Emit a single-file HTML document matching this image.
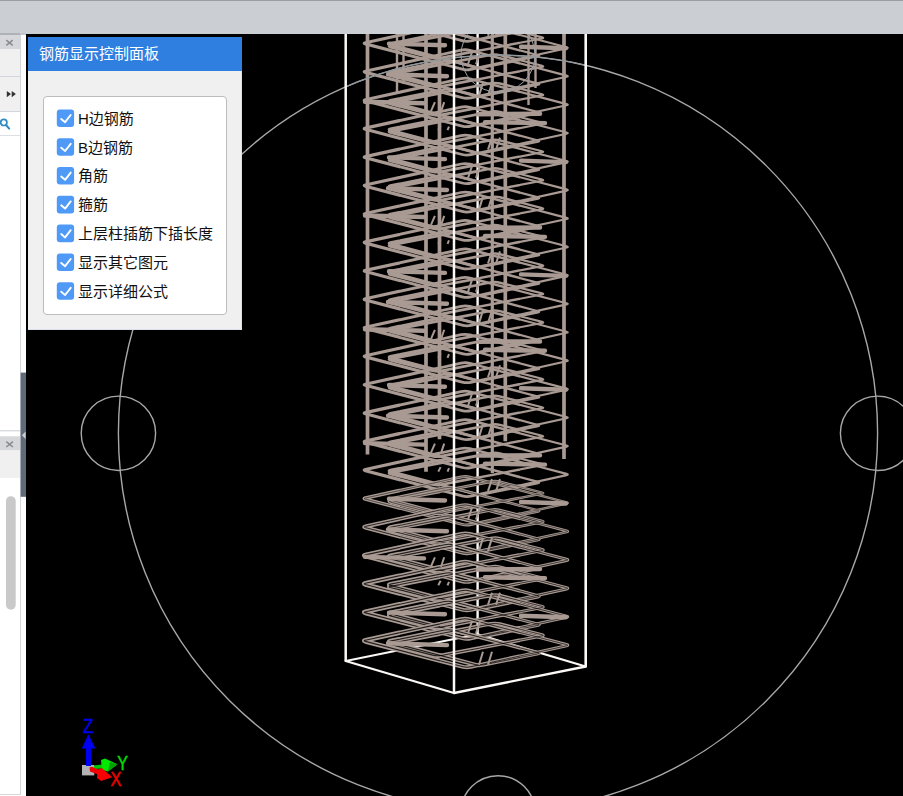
<!DOCTYPE html>
<html lang="zh-CN">
<head>
<meta charset="utf-8">
<title>钢筋三维</title>
<style>
html,body{margin:0;padding:0;}
body{width:903px;height:796px;overflow:hidden;position:relative;background:#fff;font-family:"Liberation Sans","Noto Sans CJK SC",sans-serif;}
.abs{position:absolute;}
#topbar{left:0;top:0;width:903px;height:34px;background:#cbced3;}
#topline{left:0;top:0;width:903px;height:1px;background:#9c9ea2;}
#view{left:26px;top:34px;width:877px;height:762px;background:#000;overflow:hidden;}
#side{left:0;top:34px;width:26px;height:762px;background:#fff;}
#panel{left:28px;top:37px;width:214px;height:293px;background:#f0f0f0;box-sizing:border-box;border-right:1px solid #d9e0f0;border-bottom:1px solid #d9e0f0;}
#ptitle{left:0;top:0;width:214px;height:34px;background:#2e7fe0;color:#fff;font-size:15px;line-height:34px;}
#ptitle span{position:absolute;left:11px;top:0;white-space:nowrap;}
#gbox{left:15px;top:59px;width:182px;height:217px;background:#fff;border:1px solid #bcbcbc;border-radius:4px;}
.row{position:absolute;left:34px;height:18px;white-space:nowrap;font-size:15px;color:#111;line-height:18px;}
</style>
</head>
<body>
<div id="topbar" class="abs"></div>
<div id="topline" class="abs"></div>
<div id="side" class="abs">
<div class="abs" style="left:0;top:0;width:20px;height:760px;background:#fff;border-right:1px solid #d4d7da;border-bottom:1.5px solid #d8d8d8"></div>
<div class="abs" style="left:0;top:0;width:20px;height:15px;background:#d5d7db"></div>
<div class="abs" style="left:0;top:-1px;width:20px;height:1.5px;background:#aeb2b8"></div><div class="abs" style="left:20px;top:-1px;width:6px;height:1.5px;background:#c2c5ca"></div>
<div class="abs" style="left:0;top:15px;width:20px;height:62px;background:#f0f0f0"></div>
<div class="abs" style="left:0;top:41.6px;width:20px;height:1px;background:#d2d5d9"></div>
<div class="abs" style="left:0;top:76.8px;width:20px;height:1px;background:#d2d5d9"></div>
<div class="abs" style="left:0;top:101px;width:20px;height:1px;background:#dcdfe2"></div>
<svg class="abs" style="left:0;top:0" width="26" height="762" viewBox="0 34 26 762">
  <path d="M6.3 40.2 L12.7 45.4 M12.7 40.2 L6.3 45.4" stroke="#8a8a8a" stroke-width="1.5" fill="none"/>
  <path d="M6.8 91 L11 94.1 L6.8 97.2 Z M11.7 91 L15.9 94.1 L11.7 97.2 Z" fill="#333"/>
  <circle cx="3.8" cy="122.4" r="3.1" fill="none" stroke="#2d8cc4" stroke-width="1.7"/>
  <path d="M6 125 L9.2 128.6" stroke="#2d8cc4" stroke-width="2" stroke-linecap="round"/>
  <rect x="20.6" y="372.6" width="5.4" height="124.2" fill="#5f6b79"/>
  <path d="M25.6 431.6 L25.6 439 L21.9 435.3 Z" fill="#c9ced4"/>
  <rect x="0" y="430.3" width="20" height="1" fill="#c9ccd0"/>
  <rect x="0" y="436.3" width="20" height="14.2" fill="#d5d7db"/>
  <rect x="0" y="450.5" width="20" height="27.5" fill="#f0f0f0"/>
  <path d="M6.3 441.6 L12.9 447 M12.9 441.6 L6.3 447" stroke="#8a8a8a" stroke-width="1.5" fill="none"/>
  <rect x="6" y="496.2" width="9.7" height="113.5" rx="4.8" fill="#c9c9c9"/>
</svg>

</div>
<div id="view" class="abs">
<svg width="877" height="762" viewBox="0 0 877 762" style="position:absolute;left:0;top:0">
<ellipse cx="472.0" cy="399.3" rx="379.6" ry="378.2" fill="none" stroke="#a8a8a8" stroke-width="1.4"/>
<circle cx="92.4" cy="399.3" r="37.2" fill="none" stroke="#a8a8a8" stroke-width="1.4"/>
<circle cx="851.6" cy="399.3" r="37.2" fill="none" stroke="#a8a8a8" stroke-width="1.4"/>
<circle cx="472.0" cy="778.9" r="37.2" fill="none" stroke="#a8a8a8" stroke-width="1.4"/>
<line x1="451.6" y1="-34.0" x2="451.6" y2="600.3" stroke="#fbf8f6" stroke-width="2.4" stroke-linecap="butt"/>
<line x1="451.6" y1="600.3" x2="319.7" y2="627.0" stroke="#fbf8f6" stroke-width="2.0" stroke-linecap="round"/>
<line x1="451.6" y1="600.3" x2="559.7" y2="632.5" stroke="#fbf8f6" stroke-width="2.0" stroke-linecap="round"/>
<line x1="341.5" y1="-4.0" x2="341.5" y2="420.5" stroke="#a99a93" stroke-width="3.7" stroke-linecap="butt"/>
<line x1="371.0" y1="-4.0" x2="371.0" y2="59.0" stroke="#a99a93" stroke-width="2.4" stroke-linecap="butt"/>
<line x1="377.5" y1="-4.0" x2="377.5" y2="50.0" stroke="#a99a93" stroke-width="2.4" stroke-linecap="butt"/>
<line x1="400.0" y1="-4.0" x2="400.0" y2="437.8" stroke="#a99a93" stroke-width="3.7" stroke-linecap="butt"/>
<line x1="413.5" y1="-4.0" x2="413.5" y2="405.2" stroke="#a99a93" stroke-width="3.7" stroke-linecap="butt"/>
<line x1="466.3" y1="-4.0" x2="466.3" y2="439.0" stroke="#a99a93" stroke-width="3.2" stroke-linecap="butt"/>
<line x1="479.3" y1="-4.0" x2="479.3" y2="407.2" stroke="#a99a93" stroke-width="3.7" stroke-linecap="butt"/>
<line x1="502.5" y1="-4.0" x2="502.5" y2="71.0" stroke="#a99a93" stroke-width="2.4" stroke-linecap="butt"/>
<line x1="509.5" y1="-4.0" x2="509.5" y2="54.0" stroke="#a99a93" stroke-width="2.4" stroke-linecap="butt"/>
<line x1="538.0" y1="-4.0" x2="538.0" y2="425.0" stroke="#a99a93" stroke-width="3.7" stroke-linecap="butt"/>
<defs><g id="st" fill="none" stroke-linejoin="round"><path d="M339.4 -19.7 Q337.0 -19.2 339.4 -18.5 L436.1 6.7 Q440.5 7.8 444.9 6.9 L540.6 -14.1 Q543.0 -14.7 540.6 -15.3 L443.9 -40.5 Q439.5 -41.7 435.1 -40.7Z" stroke="#a99a93" style="stroke-width:calc(3.00px*var(--t))" />
<path d="M364.5 -16.6 Q362.0 -16.2 364.4 -15.5 L406.6 -4.8 Q411.0 -3.7 415.4 -4.5 L516.0 -24.0 Q518.5 -24.5 516.1 -25.1 L473.9 -35.8 Q469.5 -37.0 465.1 -36.1Z" stroke="#a99a93" style="stroke-width:calc(3.00px*var(--t))" />
<path d="M364.4 -18.8 Q362.0 -18.2 364.4 -17.6 L449.1 4.7 Q453.5 5.8 457.9 4.9 L512.1 -6.1 Q514.5 -6.7 512.1 -7.3 L427.4 -29.6 Q423.0 -30.8 418.6 -29.8Z" stroke="#a99a93" style="stroke-width:calc(3.00px*var(--t))" />
<path d="M339.4 8.8 Q337.0 9.3 339.4 9.9 L436.1 35.2 Q440.5 36.3 444.9 35.3 L540.6 14.3 Q543.0 13.8 540.6 13.2 L443.9 -12.1 Q439.5 -13.2 435.1 -12.2Z" stroke="#a99a93" style="stroke-width:calc(3.00px*var(--t))" />
<path d="M364.5 11.8 Q362.0 12.3 364.4 12.9 L406.6 23.7 Q411.0 24.8 415.4 23.9 L516.0 4.5 Q518.5 4.0 516.1 3.4 L473.9 -7.4 Q469.5 -8.5 465.1 -7.6Z" stroke="#a99a93" style="stroke-width:calc(3.00px*var(--t))" />
<path d="M364.4 9.7 Q362.0 10.2 364.4 10.8 L449.1 33.2 Q453.5 34.3 457.9 33.4 L512.1 22.3 Q514.5 21.8 512.1 21.2 L427.4 -1.2 Q423.0 -2.3 418.6 -1.4Z" stroke="#a99a93" style="stroke-width:calc(3.00px*var(--t))" />
<path d="M339.4 37.2 Q337.0 37.8 339.4 38.4 L436.1 63.6 Q440.5 64.8 444.9 63.8 L540.6 42.8 Q543.0 42.2 540.6 41.6 L443.9 16.4 Q439.5 15.2 435.1 16.2Z" stroke="#a99a93" style="stroke-width:calc(3.00px*var(--t))" />
<path d="M364.5 40.3 Q362.0 40.8 364.4 41.4 L406.6 52.1 Q411.0 53.2 415.4 52.4 L516.0 32.9 Q518.5 32.5 516.1 31.8 L473.9 21.1 Q469.5 20.0 465.1 20.8Z" stroke="#a99a93" style="stroke-width:calc(3.00px*var(--t))" />
<path d="M364.4 38.1 Q362.0 38.7 364.4 39.3 L449.1 61.6 Q453.5 62.8 457.9 61.8 L512.1 50.8 Q514.5 50.2 512.1 49.6 L427.4 27.3 Q423.0 26.1 418.6 27.1Z" stroke="#a99a93" style="stroke-width:calc(3.00px*var(--t))" />
<path d="M339.4 65.7 Q337.0 66.2 339.4 66.8 L436.1 92.1 Q440.5 93.2 444.9 92.2 L540.6 71.2 Q543.0 70.7 540.6 70.1 L443.9 44.8 Q439.5 43.7 435.1 44.7Z" stroke="#a99a93" style="stroke-width:calc(3.00px*var(--t))" />
<path d="M364.5 68.7 Q362.0 69.2 364.4 69.8 L406.6 80.6 Q411.0 81.7 415.4 80.8 L516.0 61.4 Q518.5 60.9 516.1 60.3 L473.9 49.5 Q469.5 48.4 465.1 49.3Z" stroke="#a99a93" style="stroke-width:calc(3.00px*var(--t))" />
<path d="M364.4 66.6 Q362.0 67.1 364.4 67.7 L449.1 90.1 Q453.5 91.2 457.9 90.3 L512.1 79.2 Q514.5 78.7 512.1 78.1 L427.4 55.7 Q423.0 54.6 418.6 55.5Z" stroke="#a99a93" style="stroke-width:calc(3.00px*var(--t))" />
<path d="M339.4 94.1 Q337.0 94.6 339.4 95.3 L436.1 120.5 Q440.5 121.6 444.9 120.7 L540.6 99.7 Q543.0 99.1 540.6 98.5 L443.9 73.3 Q439.5 72.1 435.1 73.1Z" stroke="#a99a93" style="stroke-width:calc(3.00px*var(--t))" />
<path d="M364.5 97.2 Q362.0 97.6 364.4 98.3 L406.6 109.0 Q411.0 110.1 415.4 109.3 L516.0 89.8 Q518.5 89.3 516.1 88.7 L473.9 78.0 Q469.5 76.8 465.1 77.7Z" stroke="#a99a93" style="stroke-width:calc(3.00px*var(--t))" />
<path d="M364.4 95.0 Q362.0 95.5 364.4 96.2 L449.1 118.5 Q453.5 119.6 457.9 118.7 L512.1 107.7 Q514.5 107.1 512.1 106.5 L427.4 84.2 Q423.0 83.0 418.6 84.0Z" stroke="#a99a93" style="stroke-width:calc(3.00px*var(--t))" />
<path d="M339.4 122.6 Q337.0 123.1 339.4 123.7 L436.1 149.0 Q440.5 150.1 444.9 149.1 L540.6 128.1 Q543.0 127.6 540.6 127.0 L443.9 101.7 Q439.5 100.6 435.1 101.6Z" stroke="#a99a93" style="stroke-width:calc(3.00px*var(--t))" />
<path d="M364.5 125.6 Q362.0 126.1 364.4 126.7 L406.6 137.5 Q411.0 138.6 415.4 137.7 L516.0 118.3 Q518.5 117.8 516.1 117.2 L473.9 106.4 Q469.5 105.3 465.1 106.2Z" stroke="#a99a93" style="stroke-width:calc(3.00px*var(--t))" />
<path d="M364.4 123.5 Q362.0 124.0 364.4 124.6 L449.1 147.0 Q453.5 148.1 457.9 147.2 L512.1 136.1 Q514.5 135.6 512.1 135.0 L427.4 112.6 Q423.0 111.5 418.6 112.4Z" stroke="#a99a93" style="stroke-width:calc(3.00px*var(--t))" />
<path d="M339.4 151.0 Q337.0 151.6 339.4 152.2 L436.1 177.4 Q440.5 178.6 444.9 177.6 L540.6 156.6 Q543.0 156.1 540.6 155.4 L443.9 130.2 Q439.5 129.1 435.1 130.0Z" stroke="#a99a93" style="stroke-width:calc(3.00px*var(--t))" />
<path d="M364.5 154.1 Q362.0 154.6 364.4 155.2 L406.6 165.9 Q411.0 167.1 415.4 166.2 L516.0 146.7 Q518.5 146.2 516.1 145.6 L473.9 134.9 Q469.5 133.8 465.1 134.6Z" stroke="#a99a93" style="stroke-width:calc(3.00px*var(--t))" />
<path d="M364.4 151.9 Q362.0 152.5 364.4 153.1 L449.1 175.4 Q453.5 176.6 457.9 175.6 L512.1 164.6 Q514.5 164.1 512.1 163.4 L427.4 141.1 Q423.0 140.0 418.6 140.9Z" stroke="#a99a93" style="stroke-width:calc(3.00px*var(--t))" />
<path d="M339.4 179.5 Q337.0 180.0 339.4 180.6 L436.1 205.9 Q440.5 207.0 444.9 206.0 L540.6 185.0 Q543.0 184.5 540.6 183.9 L443.9 158.6 Q439.5 157.5 435.1 158.5Z" stroke="#a99a93" style="stroke-width:calc(3.00px*var(--t))" />
<path d="M364.5 182.5 Q362.0 183.0 364.4 183.6 L406.6 194.4 Q411.0 195.5 415.4 194.6 L516.0 175.2 Q518.5 174.7 516.1 174.1 L473.9 163.3 Q469.5 162.2 465.1 163.1Z" stroke="#a99a93" style="stroke-width:calc(3.00px*var(--t))" />
<path d="M364.4 180.4 Q362.0 180.9 364.4 181.5 L449.1 203.9 Q453.5 205.0 457.9 204.1 L512.1 193.0 Q514.5 192.5 512.1 191.9 L427.4 169.5 Q423.0 168.4 418.6 169.3Z" stroke="#a99a93" style="stroke-width:calc(3.00px*var(--t))" />
<path d="M339.4 207.9 Q337.0 208.4 339.4 209.1 L436.1 234.3 Q440.5 235.4 444.9 234.5 L540.6 213.5 Q543.0 212.9 540.6 212.3 L443.9 187.1 Q439.5 185.9 435.1 186.9Z" stroke="#a99a93" style="stroke-width:calc(3.00px*var(--t))" />
<path d="M364.5 211.0 Q362.0 211.4 364.4 212.1 L406.6 222.8 Q411.0 223.9 415.4 223.1 L516.0 203.6 Q518.5 203.1 516.1 202.5 L473.9 191.8 Q469.5 190.6 465.1 191.5Z" stroke="#a99a93" style="stroke-width:calc(3.00px*var(--t))" />
<path d="M364.4 208.8 Q362.0 209.3 364.4 210.0 L449.1 232.3 Q453.5 233.4 457.9 232.5 L512.1 221.5 Q514.5 220.9 512.1 220.3 L427.4 198.0 Q423.0 196.8 418.6 197.8Z" stroke="#a99a93" style="stroke-width:calc(3.00px*var(--t))" />
<path d="M339.4 236.4 Q337.0 236.9 339.4 237.5 L436.1 262.8 Q440.5 263.9 444.9 262.9 L540.6 241.9 Q543.0 241.4 540.6 240.8 L443.9 215.5 Q439.5 214.4 435.1 215.4Z" stroke="#a99a93" style="stroke-width:calc(3.00px*var(--t))" />
<path d="M364.5 239.4 Q362.0 239.9 364.4 240.5 L406.6 251.3 Q411.0 252.4 415.4 251.5 L516.0 232.1 Q518.5 231.6 516.1 231.0 L473.9 220.2 Q469.5 219.1 465.1 220.0Z" stroke="#a99a93" style="stroke-width:calc(3.00px*var(--t))" />
<path d="M364.4 237.3 Q362.0 237.8 364.4 238.4 L449.1 260.8 Q453.5 261.9 457.9 261.0 L512.1 249.9 Q514.5 249.4 512.1 248.8 L427.4 226.4 Q423.0 225.3 418.6 226.2Z" stroke="#a99a93" style="stroke-width:calc(3.00px*var(--t))" />
<path d="M339.4 264.8 Q337.0 265.4 339.4 266.0 L436.1 291.2 Q440.5 292.4 444.9 291.4 L540.6 270.4 Q543.0 269.9 540.6 269.2 L443.9 244.0 Q439.5 242.9 435.1 243.8Z" stroke="#a99a93" style="stroke-width:calc(3.00px*var(--t))" />
<path d="M364.5 267.9 Q362.0 268.4 364.4 269.0 L406.6 279.7 Q411.0 280.9 415.4 280.0 L516.0 260.5 Q518.5 260.1 516.1 259.4 L473.9 248.7 Q469.5 247.6 465.1 248.4Z" stroke="#a99a93" style="stroke-width:calc(3.00px*var(--t))" />
<path d="M364.4 265.7 Q362.0 266.2 364.4 266.9 L449.1 289.2 Q453.5 290.4 457.9 289.4 L512.1 278.4 Q514.5 277.9 512.1 277.2 L427.4 254.9 Q423.0 253.8 418.6 254.7Z" stroke="#a99a93" style="stroke-width:calc(3.00px*var(--t))" />
<path d="M339.4 293.3 Q337.0 293.8 339.4 294.4 L436.1 319.7 Q440.5 320.8 444.9 319.8 L540.6 298.8 Q543.0 298.3 540.6 297.7 L443.9 272.4 Q439.5 271.3 435.1 272.3Z" stroke="#a99a93" style="stroke-width:calc(3.00px*var(--t))" />
<path d="M364.5 296.3 Q362.0 296.8 364.4 297.4 L406.6 308.2 Q411.0 309.3 415.4 308.4 L516.0 289.0 Q518.5 288.5 516.1 287.9 L473.9 277.1 Q469.5 276.0 465.1 276.9Z" stroke="#a99a93" style="stroke-width:calc(3.00px*var(--t))" />
<path d="M364.4 294.2 Q362.0 294.7 364.4 295.3 L449.1 317.7 Q453.5 318.8 457.9 317.9 L512.1 306.8 Q514.5 306.3 512.1 305.7 L427.4 283.3 Q423.0 282.2 418.6 283.1Z" stroke="#a99a93" style="stroke-width:calc(3.00px*var(--t))" />
<path d="M339.4 321.7 Q337.0 322.2 339.4 322.9 L436.1 348.1 Q440.5 349.2 444.9 348.3 L540.6 327.3 Q543.0 326.8 540.6 326.1 L443.9 300.9 Q439.5 299.8 435.1 300.7Z" stroke="#a99a93" style="stroke-width:calc(3.00px*var(--t))" />
<path d="M364.5 324.8 Q362.0 325.2 364.4 325.9 L406.6 336.6 Q411.0 337.8 415.4 336.9 L516.0 317.4 Q518.5 316.9 516.1 316.3 L473.9 305.6 Q469.5 304.4 465.1 305.3Z" stroke="#a99a93" style="stroke-width:calc(3.00px*var(--t))" />
<path d="M364.4 322.6 Q362.0 323.1 364.4 323.8 L449.1 346.1 Q453.5 347.2 457.9 346.3 L512.1 335.3 Q514.5 334.8 512.1 334.1 L427.4 311.8 Q423.0 310.6 418.6 311.6Z" stroke="#a99a93" style="stroke-width:calc(3.00px*var(--t))" />
<path d="M339.4 350.2 Q337.0 350.7 339.4 351.3 L436.1 376.6 Q440.5 377.7 444.9 376.7 L540.6 355.7 Q543.0 355.2 540.6 354.6 L443.9 329.3 Q439.5 328.2 435.1 329.2Z" stroke="#a99a93" style="stroke-width:calc(3.00px*var(--t))" />
<path d="M364.5 353.2 Q362.0 353.7 364.4 354.3 L406.6 365.1 Q411.0 366.2 415.4 365.3 L516.0 345.9 Q518.5 345.4 516.1 344.8 L473.9 334.0 Q469.5 332.9 465.1 333.8Z" stroke="#a99a93" style="stroke-width:calc(3.00px*var(--t))" />
<path d="M364.4 351.1 Q362.0 351.6 364.4 352.2 L449.1 374.6 Q453.5 375.7 457.9 374.8 L512.1 363.7 Q514.5 363.2 512.1 362.6 L427.4 340.2 Q423.0 339.1 418.6 340.0Z" stroke="#a99a93" style="stroke-width:calc(3.00px*var(--t))" />
<path d="M339.4 378.6 Q337.0 379.1 339.4 379.8 L436.1 405.0 Q440.5 406.1 444.9 405.2 L540.6 384.2 Q543.0 383.6 540.6 383.0 L443.9 357.8 Q439.5 356.6 435.1 357.6Z" stroke="#a99a93" style="stroke-width:calc(3.00px*var(--t))" />
<path d="M364.5 381.7 Q362.0 382.1 364.4 382.8 L406.6 393.5 Q411.0 394.6 415.4 393.8 L516.0 374.3 Q518.5 373.8 516.1 373.2 L473.9 362.5 Q469.5 361.3 465.1 362.2Z" stroke="#a99a93" style="stroke-width:calc(3.00px*var(--t))" />
<path d="M364.4 379.5 Q362.0 380.0 364.4 380.7 L449.1 403.0 Q453.5 404.1 457.9 403.2 L512.1 392.2 Q514.5 391.6 512.1 391.0 L427.4 368.7 Q423.0 367.5 418.6 368.5Z" stroke="#a99a93" style="stroke-width:calc(3.00px*var(--t))" />
<path d="M339.4 407.1 Q337.0 407.6 339.4 408.2 L436.1 433.5 Q440.5 434.6 444.9 433.6 L540.6 412.6 Q543.0 412.1 540.6 411.5 L443.9 386.2 Q439.5 385.1 435.1 386.1Z" stroke="#a99a93" style="stroke-width:calc(3.00px*var(--t))" />
<path d="M364.5 410.1 Q362.0 410.6 364.4 411.2 L406.6 422.0 Q411.0 423.1 415.4 422.2 L516.0 402.8 Q518.5 402.3 516.1 401.7 L473.9 390.9 Q469.5 389.8 465.1 390.7Z" stroke="#a99a93" style="stroke-width:calc(3.00px*var(--t))" />
<path d="M364.4 408.0 Q362.0 408.5 364.4 409.1 L449.1 431.5 Q453.5 432.6 457.9 431.7 L512.1 420.6 Q514.5 420.1 512.1 419.5 L427.4 397.1 Q423.0 396.0 418.6 396.9Z" stroke="#a99a93" style="stroke-width:calc(3.00px*var(--t))" />
<path d="M339.4 435.5 Q337.0 436.1 339.4 436.7 L436.1 461.9 Q440.5 463.1 444.9 462.1 L540.6 441.1 Q543.0 440.6 540.6 439.9 L443.9 414.7 Q439.5 413.6 435.1 414.5Z" stroke="#a99a93" style="stroke-width:calc(3.00px*var(--t))" />
<path d="M364.5 438.6 Q362.0 439.1 364.4 439.7 L406.6 450.4 Q411.0 451.6 415.4 450.7 L516.0 431.2 Q518.5 430.8 516.1 430.1 L473.9 419.4 Q469.5 418.2 465.1 419.1Z" stroke="#a99a93" style="stroke-width:calc(3.00px*var(--t))" />
<path d="M364.4 436.4 Q362.0 436.9 364.4 437.6 L449.1 459.9 Q453.5 461.1 457.9 460.1 L512.1 449.1 Q514.5 448.6 512.1 447.9 L427.4 425.6 Q423.0 424.4 418.6 425.4Z" stroke="#a99a93" style="stroke-width:calc(3.00px*var(--t))" />
<path d="M339.4 464.0 Q337.0 464.5 339.4 465.1 L436.1 490.4 Q440.5 491.5 444.9 490.5 L540.6 469.5 Q543.0 469.0 540.6 468.4 L443.9 443.1 Q439.5 442.0 435.1 443.0Z" stroke="#a99a93" style="stroke-width:calc(3.30px*var(--t))" />
<path d="M364.5 467.0 Q362.0 467.5 364.4 468.1 L406.6 478.9 Q411.0 480.0 415.4 479.1 L516.0 459.7 Q518.5 459.2 516.1 458.6 L473.9 447.8 Q469.5 446.7 465.1 447.6Z" stroke="#a99a93" style="stroke-width:calc(3.30px*var(--t))" />
<path d="M364.4 464.9 Q362.0 465.4 364.4 466.0 L449.1 488.4 Q453.5 489.5 457.9 488.6 L512.1 477.5 Q514.5 477.0 512.1 476.4 L427.4 454.0 Q423.0 452.9 418.6 453.8Z" stroke="#a99a93" style="stroke-width:calc(3.30px*var(--t))" />
<path d="M339.4 464.0 Q337.0 464.5 339.4 465.1 L436.1 490.4 Q440.5 491.5 444.9 490.5 L540.6 469.5 Q543.0 469.0 540.6 468.4 L443.9 443.1 Q439.5 442.0 435.1 443.0Z" stroke="#000" style="stroke-width:calc(0.60px*var(--t))" stroke-opacity="0.8"/>
<path d="M364.5 467.0 Q362.0 467.5 364.4 468.1 L406.6 478.9 Q411.0 480.0 415.4 479.1 L516.0 459.7 Q518.5 459.2 516.1 458.6 L473.9 447.8 Q469.5 446.7 465.1 447.6Z" stroke="#000" style="stroke-width:calc(0.60px*var(--t))" stroke-opacity="0.8"/>
<path d="M364.4 464.9 Q362.0 465.4 364.4 466.0 L449.1 488.4 Q453.5 489.5 457.9 488.6 L512.1 477.5 Q514.5 477.0 512.1 476.4 L427.4 454.0 Q423.0 452.9 418.6 453.8Z" stroke="#000" style="stroke-width:calc(0.60px*var(--t))" stroke-opacity="0.8"/>
<path d="M339.4 492.4 Q337.0 492.9 339.4 493.6 L436.1 518.8 Q440.5 519.9 444.9 519.0 L540.6 498.0 Q543.0 497.4 540.6 496.8 L443.9 471.6 Q439.5 470.4 435.1 471.4Z" stroke="#a99a93" style="stroke-width:calc(3.80px*var(--t))" />
<path d="M364.5 495.5 Q362.0 495.9 364.4 496.6 L406.6 507.3 Q411.0 508.4 415.4 507.6 L516.0 488.1 Q518.5 487.6 516.1 487.0 L473.9 476.3 Q469.5 475.1 465.1 476.0Z" stroke="#a99a93" style="stroke-width:calc(3.80px*var(--t))" />
<path d="M364.4 493.3 Q362.0 493.8 364.4 494.5 L449.1 516.8 Q453.5 517.9 457.9 517.0 L512.1 506.0 Q514.5 505.4 512.1 504.8 L427.4 482.5 Q423.0 481.3 418.6 482.3Z" stroke="#a99a93" style="stroke-width:calc(3.80px*var(--t))" />
<path d="M339.4 492.4 Q337.0 492.9 339.4 493.6 L436.1 518.8 Q440.5 519.9 444.9 519.0 L540.6 498.0 Q543.0 497.4 540.6 496.8 L443.9 471.6 Q439.5 470.4 435.1 471.4Z" stroke="#000" style="stroke-width:calc(0.90px*var(--t))" stroke-opacity="0.8"/>
<path d="M364.5 495.5 Q362.0 495.9 364.4 496.6 L406.6 507.3 Q411.0 508.4 415.4 507.6 L516.0 488.1 Q518.5 487.6 516.1 487.0 L473.9 476.3 Q469.5 475.1 465.1 476.0Z" stroke="#000" style="stroke-width:calc(0.90px*var(--t))" stroke-opacity="0.8"/>
<path d="M364.4 493.3 Q362.0 493.8 364.4 494.5 L449.1 516.8 Q453.5 517.9 457.9 517.0 L512.1 506.0 Q514.5 505.4 512.1 504.8 L427.4 482.5 Q423.0 481.3 418.6 482.3Z" stroke="#000" style="stroke-width:calc(0.90px*var(--t))" stroke-opacity="0.8"/>
<path d="M339.4 520.9 Q337.0 521.4 339.4 522.0 L436.1 547.3 Q440.5 548.4 444.9 547.4 L540.6 526.4 Q543.0 525.9 540.6 525.3 L443.9 500.0 Q439.5 498.9 435.1 499.9Z" stroke="#a99a93" style="stroke-width:calc(4.30px*var(--t))" />
<path d="M364.5 523.9 Q362.0 524.4 364.4 525.0 L406.6 535.8 Q411.0 536.9 415.4 536.0 L516.0 516.6 Q518.5 516.1 516.1 515.5 L473.9 504.7 Q469.5 503.6 465.1 504.5Z" stroke="#a99a93" style="stroke-width:calc(4.30px*var(--t))" />
<path d="M364.4 521.8 Q362.0 522.3 364.4 522.9 L449.1 545.3 Q453.5 546.4 457.9 545.5 L512.1 534.4 Q514.5 533.9 512.1 533.3 L427.4 510.9 Q423.0 509.8 418.6 510.7Z" stroke="#a99a93" style="stroke-width:calc(4.30px*var(--t))" />
<path d="M339.4 520.9 Q337.0 521.4 339.4 522.0 L436.1 547.3 Q440.5 548.4 444.9 547.4 L540.6 526.4 Q543.0 525.9 540.6 525.3 L443.9 500.0 Q439.5 498.9 435.1 499.9Z" stroke="#000" style="stroke-width:calc(1.10px*var(--t))" stroke-opacity="0.8"/>
<path d="M364.5 523.9 Q362.0 524.4 364.4 525.0 L406.6 535.8 Q411.0 536.9 415.4 536.0 L516.0 516.6 Q518.5 516.1 516.1 515.5 L473.9 504.7 Q469.5 503.6 465.1 504.5Z" stroke="#000" style="stroke-width:calc(1.10px*var(--t))" stroke-opacity="0.8"/>
<path d="M364.4 521.8 Q362.0 522.3 364.4 522.9 L449.1 545.3 Q453.5 546.4 457.9 545.5 L512.1 534.4 Q514.5 533.9 512.1 533.3 L427.4 510.9 Q423.0 509.8 418.6 510.7Z" stroke="#000" style="stroke-width:calc(1.10px*var(--t))" stroke-opacity="0.8"/>
<path d="M339.4 549.3 Q337.0 549.8 339.4 550.5 L436.1 575.7 Q440.5 576.8 444.9 575.9 L540.6 554.9 Q543.0 554.3 540.6 553.7 L443.9 528.5 Q439.5 527.3 435.1 528.3Z" stroke="#a99a93" style="stroke-width:calc(4.30px*var(--t))" />
<path d="M364.5 552.4 Q362.0 552.8 364.4 553.5 L406.6 564.2 Q411.0 565.3 415.4 564.5 L516.0 545.0 Q518.5 544.5 516.1 543.9 L473.9 533.2 Q469.5 532.0 465.1 532.9Z" stroke="#a99a93" style="stroke-width:calc(4.30px*var(--t))" />
<path d="M364.4 550.2 Q362.0 550.7 364.4 551.4 L449.1 573.7 Q453.5 574.8 457.9 573.9 L512.1 562.9 Q514.5 562.3 512.1 561.7 L427.4 539.4 Q423.0 538.2 418.6 539.2Z" stroke="#a99a93" style="stroke-width:calc(4.30px*var(--t))" />
<path d="M339.4 549.3 Q337.0 549.8 339.4 550.5 L436.1 575.7 Q440.5 576.8 444.9 575.9 L540.6 554.9 Q543.0 554.3 540.6 553.7 L443.9 528.5 Q439.5 527.3 435.1 528.3Z" stroke="#000" style="stroke-width:calc(1.10px*var(--t))" stroke-opacity="0.8"/>
<path d="M364.5 552.4 Q362.0 552.8 364.4 553.5 L406.6 564.2 Q411.0 565.3 415.4 564.5 L516.0 545.0 Q518.5 544.5 516.1 543.9 L473.9 533.2 Q469.5 532.0 465.1 532.9Z" stroke="#000" style="stroke-width:calc(1.10px*var(--t))" stroke-opacity="0.8"/>
<path d="M364.4 550.2 Q362.0 550.7 364.4 551.4 L449.1 573.7 Q453.5 574.8 457.9 573.9 L512.1 562.9 Q514.5 562.3 512.1 561.7 L427.4 539.4 Q423.0 538.2 418.6 539.2Z" stroke="#000" style="stroke-width:calc(1.10px*var(--t))" stroke-opacity="0.8"/>
<path d="M339.4 577.8 Q337.0 578.3 339.4 578.9 L436.1 604.2 Q440.5 605.3 444.9 604.3 L540.6 583.3 Q543.0 582.8 540.6 582.2 L443.9 556.9 Q439.5 555.8 435.1 556.8Z" stroke="#a99a93" style="stroke-width:calc(4.30px*var(--t))" />
<path d="M364.5 580.8 Q362.0 581.3 364.4 581.9 L406.6 592.7 Q411.0 593.8 415.4 592.9 L516.0 573.5 Q518.5 573.0 516.1 572.4 L473.9 561.6 Q469.5 560.5 465.1 561.4Z" stroke="#a99a93" style="stroke-width:calc(4.30px*var(--t))" />
<path d="M364.4 578.7 Q362.0 579.2 364.4 579.8 L449.1 602.2 Q453.5 603.3 457.9 602.4 L512.1 591.3 Q514.5 590.8 512.1 590.2 L427.4 567.8 Q423.0 566.7 418.6 567.6Z" stroke="#a99a93" style="stroke-width:calc(4.30px*var(--t))" />
<path d="M339.4 577.8 Q337.0 578.3 339.4 578.9 L436.1 604.2 Q440.5 605.3 444.9 604.3 L540.6 583.3 Q543.0 582.8 540.6 582.2 L443.9 556.9 Q439.5 555.8 435.1 556.8Z" stroke="#000" style="stroke-width:calc(1.10px*var(--t))" stroke-opacity="0.8"/>
<path d="M364.5 580.8 Q362.0 581.3 364.4 581.9 L406.6 592.7 Q411.0 593.8 415.4 592.9 L516.0 573.5 Q518.5 573.0 516.1 572.4 L473.9 561.6 Q469.5 560.5 465.1 561.4Z" stroke="#000" style="stroke-width:calc(1.10px*var(--t))" stroke-opacity="0.8"/>
<path d="M364.4 578.7 Q362.0 579.2 364.4 579.8 L449.1 602.2 Q453.5 603.3 457.9 602.4 L512.1 591.3 Q514.5 590.8 512.1 590.2 L427.4 567.8 Q423.0 566.7 418.6 567.6Z" stroke="#000" style="stroke-width:calc(1.10px*var(--t))" stroke-opacity="0.8"/>
<path d="M339.4 606.2 Q337.0 606.7 339.4 607.4 L436.1 632.6 Q440.5 633.7 444.9 632.8 L540.6 611.8 Q543.0 611.2 540.6 610.6 L443.9 585.4 Q439.5 584.2 435.1 585.2Z" stroke="#a99a93" style="stroke-width:calc(4.30px*var(--t))" />
<path d="M364.5 609.3 Q362.0 609.7 364.4 610.4 L406.6 621.1 Q411.0 622.2 415.4 621.4 L516.0 601.9 Q518.5 601.4 516.1 600.8 L473.9 590.1 Q469.5 588.9 465.1 589.8Z" stroke="#a99a93" style="stroke-width:calc(4.30px*var(--t))" />
<path d="M364.4 607.1 Q362.0 607.6 364.4 608.3 L449.1 630.6 Q453.5 631.7 457.9 630.8 L512.1 619.8 Q514.5 619.2 512.1 618.6 L427.4 596.3 Q423.0 595.1 418.6 596.1Z" stroke="#a99a93" style="stroke-width:calc(4.30px*var(--t))" />
<path d="M339.4 606.2 Q337.0 606.7 339.4 607.4 L436.1 632.6 Q440.5 633.7 444.9 632.8 L540.6 611.8 Q543.0 611.2 540.6 610.6 L443.9 585.4 Q439.5 584.2 435.1 585.2Z" stroke="#000" style="stroke-width:calc(1.10px*var(--t))" stroke-opacity="0.8"/>
<path d="M364.5 609.3 Q362.0 609.7 364.4 610.4 L406.6 621.1 Q411.0 622.2 415.4 621.4 L516.0 601.9 Q518.5 601.4 516.1 600.8 L473.9 590.1 Q469.5 588.9 465.1 589.8Z" stroke="#000" style="stroke-width:calc(1.10px*var(--t))" stroke-opacity="0.8"/>
<path d="M364.4 607.1 Q362.0 607.6 364.4 608.3 L449.1 630.6 Q453.5 631.7 457.9 630.8 L512.1 619.8 Q514.5 619.2 512.1 618.6 L427.4 596.3 Q423.0 595.1 418.6 596.1Z" stroke="#000" style="stroke-width:calc(1.10px*var(--t))" stroke-opacity="0.8"/></g>
<clipPath id="tb0"><rect x="304" y="0" width="70" height="762"/></clipPath>
<clipPath id="tb1"><rect x="374" y="0" width="40" height="762"/></clipPath>
<clipPath id="tb2"><rect x="414" y="0" width="40" height="762"/></clipPath>
<clipPath id="tb3"><rect x="454" y="0" width="40" height="762"/></clipPath>
<clipPath id="tb4"><rect x="494" y="0" width="80" height="762"/></clipPath>
</defs>
<use href="#st" style="--t:1.07" clip-path="url(#tb0)"/>
<use href="#st" style="--t:1.00" clip-path="url(#tb1)"/>
<use href="#st" style="--t:0.92" clip-path="url(#tb2)"/>
<use href="#st" style="--t:0.83" clip-path="url(#tb3)"/>
<use href="#st" style="--t:0.72" clip-path="url(#tb4)"/>
<line x1="408.9" y1="-45.7" x2="405.0" y2="-36.7" stroke="#a99a93" stroke-width="2.0" stroke-linecap="butt"/>
<line x1="418.2" y1="-45.7" x2="415.0" y2="-36.2" stroke="#a99a93" stroke-width="2.0" stroke-linecap="butt"/>
<line x1="414.6" y1="-22.2" x2="412.3" y2="-17.7" stroke="#a99a93" stroke-width="2.0" stroke-linecap="butt"/>
<line x1="423.0" y1="-21.2" x2="421.5" y2="-17.7" stroke="#a99a93" stroke-width="2.0" stroke-linecap="butt"/>
<line x1="462.0" y1="1.8" x2="466.0" y2="-10.2" stroke="#a99a93" stroke-width="2.0" stroke-linecap="butt"/>
<line x1="470.0" y1="1.8" x2="474.0" y2="-10.2" stroke="#a99a93" stroke-width="2.0" stroke-linecap="butt"/>
<line x1="442.0" y1="30.3" x2="446.0" y2="18.3" stroke="#a99a93" stroke-width="2.0" stroke-linecap="butt"/>
<line x1="450.0" y1="30.3" x2="454.0" y2="18.3" stroke="#a99a93" stroke-width="2.0" stroke-linecap="butt"/>
<line x1="453.0" y1="61.8" x2="457.0" y2="48.8" stroke="#a99a93" stroke-width="2.0" stroke-linecap="butt"/>
<line x1="462.0" y1="61.8" x2="466.0" y2="48.8" stroke="#a99a93" stroke-width="2.0" stroke-linecap="butt"/>
<line x1="408.9" y1="68.1" x2="405.0" y2="77.1" stroke="#a99a93" stroke-width="2.0" stroke-linecap="butt"/>
<line x1="418.2" y1="68.1" x2="415.0" y2="77.6" stroke="#a99a93" stroke-width="2.0" stroke-linecap="butt"/>
<line x1="414.6" y1="91.6" x2="412.3" y2="96.1" stroke="#a99a93" stroke-width="2.0" stroke-linecap="butt"/>
<line x1="423.0" y1="92.6" x2="421.5" y2="96.1" stroke="#a99a93" stroke-width="2.0" stroke-linecap="butt"/>
<line x1="462.0" y1="115.6" x2="466.0" y2="103.6" stroke="#a99a93" stroke-width="2.0" stroke-linecap="butt"/>
<line x1="470.0" y1="115.6" x2="474.0" y2="103.6" stroke="#a99a93" stroke-width="2.0" stroke-linecap="butt"/>
<line x1="442.0" y1="144.1" x2="446.0" y2="132.1" stroke="#a99a93" stroke-width="2.0" stroke-linecap="butt"/>
<line x1="450.0" y1="144.1" x2="454.0" y2="132.1" stroke="#a99a93" stroke-width="2.0" stroke-linecap="butt"/>
<line x1="453.0" y1="175.6" x2="457.0" y2="162.6" stroke="#a99a93" stroke-width="2.0" stroke-linecap="butt"/>
<line x1="462.0" y1="175.6" x2="466.0" y2="162.6" stroke="#a99a93" stroke-width="2.0" stroke-linecap="butt"/>
<line x1="408.9" y1="181.9" x2="405.0" y2="190.9" stroke="#a99a93" stroke-width="2.0" stroke-linecap="butt"/>
<line x1="418.2" y1="181.9" x2="415.0" y2="191.4" stroke="#a99a93" stroke-width="2.0" stroke-linecap="butt"/>
<line x1="414.6" y1="205.4" x2="412.3" y2="209.9" stroke="#a99a93" stroke-width="2.0" stroke-linecap="butt"/>
<line x1="423.0" y1="206.4" x2="421.5" y2="209.9" stroke="#a99a93" stroke-width="2.0" stroke-linecap="butt"/>
<line x1="462.0" y1="229.4" x2="466.0" y2="217.4" stroke="#a99a93" stroke-width="2.0" stroke-linecap="butt"/>
<line x1="470.0" y1="229.4" x2="474.0" y2="217.4" stroke="#a99a93" stroke-width="2.0" stroke-linecap="butt"/>
<line x1="442.0" y1="257.9" x2="446.0" y2="245.9" stroke="#a99a93" stroke-width="2.0" stroke-linecap="butt"/>
<line x1="450.0" y1="257.9" x2="454.0" y2="245.9" stroke="#a99a93" stroke-width="2.0" stroke-linecap="butt"/>
<line x1="453.0" y1="289.4" x2="457.0" y2="276.4" stroke="#a99a93" stroke-width="2.0" stroke-linecap="butt"/>
<line x1="462.0" y1="289.4" x2="466.0" y2="276.4" stroke="#a99a93" stroke-width="2.0" stroke-linecap="butt"/>
<line x1="408.9" y1="295.8" x2="405.0" y2="304.8" stroke="#a99a93" stroke-width="2.0" stroke-linecap="butt"/>
<line x1="418.2" y1="295.8" x2="415.0" y2="305.2" stroke="#a99a93" stroke-width="2.0" stroke-linecap="butt"/>
<line x1="414.6" y1="319.2" x2="412.3" y2="323.8" stroke="#a99a93" stroke-width="2.0" stroke-linecap="butt"/>
<line x1="423.0" y1="320.2" x2="421.5" y2="323.8" stroke="#a99a93" stroke-width="2.0" stroke-linecap="butt"/>
<line x1="462.0" y1="343.2" x2="466.0" y2="331.2" stroke="#a99a93" stroke-width="2.0" stroke-linecap="butt"/>
<line x1="470.0" y1="343.2" x2="474.0" y2="331.2" stroke="#a99a93" stroke-width="2.0" stroke-linecap="butt"/>
<line x1="442.0" y1="371.7" x2="446.0" y2="359.7" stroke="#a99a93" stroke-width="2.0" stroke-linecap="butt"/>
<line x1="450.0" y1="371.7" x2="454.0" y2="359.7" stroke="#a99a93" stroke-width="2.0" stroke-linecap="butt"/>
<line x1="453.0" y1="403.1" x2="457.0" y2="390.1" stroke="#a99a93" stroke-width="2.0" stroke-linecap="butt"/>
<line x1="462.0" y1="403.1" x2="466.0" y2="390.1" stroke="#a99a93" stroke-width="2.0" stroke-linecap="butt"/>
<line x1="408.9" y1="409.6" x2="405.0" y2="418.6" stroke="#a99a93" stroke-width="2.0" stroke-linecap="butt"/>
<line x1="418.2" y1="409.6" x2="415.0" y2="419.1" stroke="#a99a93" stroke-width="2.0" stroke-linecap="butt"/>
<line x1="414.6" y1="433.1" x2="412.3" y2="437.6" stroke="#a99a93" stroke-width="2.0" stroke-linecap="butt"/>
<line x1="423.0" y1="434.1" x2="421.5" y2="437.6" stroke="#a99a93" stroke-width="2.0" stroke-linecap="butt"/>
<line x1="462.0" y1="457.1" x2="466.0" y2="445.1" stroke="#a99a93" stroke-width="2.0" stroke-linecap="butt"/>
<line x1="470.0" y1="457.1" x2="474.0" y2="445.1" stroke="#a99a93" stroke-width="2.0" stroke-linecap="butt"/>
<line x1="442.0" y1="485.5" x2="446.0" y2="473.5" stroke="#a99a93" stroke-width="2.0" stroke-linecap="butt"/>
<line x1="450.0" y1="485.5" x2="454.0" y2="473.5" stroke="#a99a93" stroke-width="2.0" stroke-linecap="butt"/>
<line x1="453.0" y1="516.9" x2="457.0" y2="503.9" stroke="#a99a93" stroke-width="2.0" stroke-linecap="butt"/>
<line x1="462.0" y1="516.9" x2="466.0" y2="503.9" stroke="#a99a93" stroke-width="2.0" stroke-linecap="butt"/>
<line x1="408.9" y1="523.3" x2="405.0" y2="532.3" stroke="#a99a93" stroke-width="2.0" stroke-linecap="butt"/>
<line x1="418.2" y1="523.3" x2="415.0" y2="532.8" stroke="#a99a93" stroke-width="2.0" stroke-linecap="butt"/>
<line x1="414.6" y1="546.8" x2="412.3" y2="551.3" stroke="#a99a93" stroke-width="2.0" stroke-linecap="butt"/>
<line x1="423.0" y1="547.8" x2="421.5" y2="551.3" stroke="#a99a93" stroke-width="2.0" stroke-linecap="butt"/>
<line x1="462.0" y1="570.8" x2="466.0" y2="558.8" stroke="#a99a93" stroke-width="2.0" stroke-linecap="butt"/>
<line x1="470.0" y1="570.8" x2="474.0" y2="558.8" stroke="#a99a93" stroke-width="2.0" stroke-linecap="butt"/>
<line x1="442.0" y1="599.3" x2="446.0" y2="587.3" stroke="#a99a93" stroke-width="2.0" stroke-linecap="butt"/>
<line x1="450.0" y1="599.3" x2="454.0" y2="587.3" stroke="#a99a93" stroke-width="2.0" stroke-linecap="butt"/>
<line x1="453.0" y1="630.7" x2="457.0" y2="617.7" stroke="#a99a93" stroke-width="2.0" stroke-linecap="butt"/>
<line x1="462.0" y1="630.7" x2="466.0" y2="617.7" stroke="#a99a93" stroke-width="2.0" stroke-linecap="butt"/>
<line x1="459.0" y1="-25.7" x2="519.0" y2="-24.7" stroke="#a99a93" stroke-width="4.4" stroke-linecap="round"/>
<line x1="363.0" y1="9.6" x2="419.0" y2="11.3" stroke="#a99a93" stroke-width="4.4" stroke-linecap="round"/>
<line x1="495.0" y1="12.8" x2="540.0" y2="14.3" stroke="#a99a93" stroke-width="4.4" stroke-linecap="round"/>
<line x1="362.0" y1="40.3" x2="421.0" y2="42.2" stroke="#a99a93" stroke-width="4.4" stroke-linecap="round"/>
<line x1="339.0" y1="67.7" x2="398.0" y2="69.2" stroke="#a99a93" stroke-width="4.4" stroke-linecap="round"/>
<line x1="452.0" y1="80.2" x2="514.0" y2="79.8" stroke="#a99a93" stroke-width="4.5" stroke-linecap="round"/>
<line x1="459.0" y1="88.1" x2="519.0" y2="89.1" stroke="#a99a93" stroke-width="4.4" stroke-linecap="round"/>
<line x1="363.0" y1="123.4" x2="419.0" y2="125.1" stroke="#a99a93" stroke-width="4.4" stroke-linecap="round"/>
<line x1="495.0" y1="126.6" x2="540.0" y2="128.1" stroke="#a99a93" stroke-width="4.4" stroke-linecap="round"/>
<line x1="362.0" y1="154.2" x2="421.0" y2="156.0" stroke="#a99a93" stroke-width="4.4" stroke-linecap="round"/>
<line x1="339.0" y1="181.5" x2="398.0" y2="183.0" stroke="#a99a93" stroke-width="4.4" stroke-linecap="round"/>
<line x1="452.0" y1="194.0" x2="514.0" y2="193.6" stroke="#a99a93" stroke-width="4.5" stroke-linecap="round"/>
<line x1="459.0" y1="201.9" x2="519.0" y2="202.9" stroke="#a99a93" stroke-width="4.4" stroke-linecap="round"/>
<line x1="363.0" y1="237.2" x2="419.0" y2="238.9" stroke="#a99a93" stroke-width="4.4" stroke-linecap="round"/>
<line x1="495.0" y1="240.4" x2="540.0" y2="241.9" stroke="#a99a93" stroke-width="4.4" stroke-linecap="round"/>
<line x1="362.0" y1="268.0" x2="421.0" y2="269.8" stroke="#a99a93" stroke-width="4.4" stroke-linecap="round"/>
<line x1="339.0" y1="295.3" x2="398.0" y2="296.8" stroke="#a99a93" stroke-width="4.4" stroke-linecap="round"/>
<line x1="452.0" y1="307.8" x2="514.0" y2="307.4" stroke="#a99a93" stroke-width="4.5" stroke-linecap="round"/>
<line x1="459.0" y1="315.8" x2="519.0" y2="316.8" stroke="#a99a93" stroke-width="4.4" stroke-linecap="round"/>
<line x1="363.0" y1="351.0" x2="419.0" y2="352.7" stroke="#a99a93" stroke-width="4.4" stroke-linecap="round"/>
<line x1="495.0" y1="354.2" x2="540.0" y2="355.7" stroke="#a99a93" stroke-width="4.4" stroke-linecap="round"/>
<line x1="362.0" y1="381.8" x2="421.0" y2="383.5" stroke="#a99a93" stroke-width="4.4" stroke-linecap="round"/>
<line x1="339.0" y1="409.1" x2="398.0" y2="410.6" stroke="#a99a93" stroke-width="4.4" stroke-linecap="round"/>
<line x1="452.0" y1="421.6" x2="514.0" y2="421.2" stroke="#a99a93" stroke-width="4.5" stroke-linecap="round"/>
<line x1="459.0" y1="429.6" x2="519.0" y2="430.6" stroke="#a99a93" stroke-width="4.4" stroke-linecap="round"/>
<line x1="363.0" y1="464.8" x2="419.0" y2="466.5" stroke="#a99a93" stroke-width="4.4" stroke-linecap="round"/>
<line x1="495.0" y1="468.0" x2="540.0" y2="469.5" stroke="#a99a93" stroke-width="4.4" stroke-linecap="round"/>
<line x1="362.0" y1="495.5" x2="421.0" y2="497.3" stroke="#a99a93" stroke-width="4.4" stroke-linecap="round"/>
<line x1="339.0" y1="522.9" x2="398.0" y2="524.4" stroke="#a99a93" stroke-width="4.4" stroke-linecap="round"/>
<line x1="452.0" y1="535.4" x2="514.0" y2="535.0" stroke="#a99a93" stroke-width="4.5" stroke-linecap="round"/>
<line x1="459.0" y1="543.3" x2="519.0" y2="544.3" stroke="#a99a93" stroke-width="4.4" stroke-linecap="round"/>
<line x1="363.0" y1="578.6" x2="419.0" y2="580.3" stroke="#a99a93" stroke-width="4.4" stroke-linecap="round"/>
<line x1="495.0" y1="581.8" x2="540.0" y2="583.3" stroke="#a99a93" stroke-width="4.4" stroke-linecap="round"/>
<line x1="362.0" y1="609.3" x2="421.0" y2="611.1" stroke="#a99a93" stroke-width="4.4" stroke-linecap="round"/>
<circle cx="472.0" cy="21.1" r="37.0" fill="none" stroke="#9aa1a6" stroke-width="1.0"/>
<clipPath id="colclip"><rect x="321.0" y="0" width="238.0" height="200"/></clipPath>
<ellipse cx="472.0" cy="399.3" rx="379.6" ry="378.2" fill="none" stroke="#8f979c" stroke-width="1.2" clip-path="url(#colclip)"/>
<line x1="319.7" y1="-34.0" x2="319.7" y2="627.0" stroke="#fbf8f6" stroke-width="2.5" stroke-linecap="butt"/>
<line x1="428.0" y1="-34.0" x2="428.0" y2="659.0" stroke="#fbf8f6" stroke-width="2.5" stroke-linecap="butt"/>
<line x1="559.7" y1="-34.0" x2="559.7" y2="632.5" stroke="#fbf8f6" stroke-width="2.6" stroke-linecap="butt"/>
<line x1="319.7" y1="627.0" x2="428.0" y2="659.0" stroke="#fbf8f6" stroke-width="2.3" stroke-linecap="round"/>
<line x1="428.0" y1="659.0" x2="559.7" y2="632.5" stroke="#fbf8f6" stroke-width="2.3" stroke-linecap="round"/>
<polygon points="56.0,731.0 68.3,731.0 68.3,741.4 56.0,741.4" fill="#b2b2b2"/>
<polygon points="60.0,714.0 65.0,714.0 65.0,732.0 60.0,732.0" fill="#0000f0"/>
<polygon points="62.4,700.3 69.4,714.5 55.7,714.5" fill="#0000f0"/>
<polygon points="68.0,731.5 76.0,730.5 76.0,734.5 68.0,735.0" fill="#00c800"/>
<polygon points="75.0,726.0 79.0,724.5 91.5,730.3 82.0,737.5 76.0,736.0" fill="#00e800"/>
<polygon points="82.0,737.5 91.5,730.3 84.0,728.0" fill="#00a000"/>
<polygon points="63.5,733.5 66.0,732.8 74.0,736.5 72.0,740.5 64.0,737.5" fill="#f00000"/>
<polygon points="71.5,736.0 75.5,733.8 86.3,743.3 75.0,747.0 71.0,744.0" fill="#f80000"/>
<text transform="translate(56.9 698.9) scale(0.85 1)" font-family="Liberation Sans, sans-serif" font-size="20" fill="#0000ee" stroke="#0000ee" stroke-width="0.5">Z</text>
<text transform="translate(91.3 736.3) scale(0.80 1)" font-family="Liberation Sans, sans-serif" font-size="20" fill="#00dc00" stroke="#00dc00" stroke-width="0.5">Y</text>
<text transform="translate(84.5 752.0) scale(0.82 1)" font-family="Liberation Sans, sans-serif" font-size="20" fill="#ee0000" stroke="#ee0000" stroke-width="0.5">X</text>
</svg>
</div>
<div id="panel" class="abs">
  <div id="ptitle" class="abs"><span>钢筋显示控制面板</span></div>
  <div id="gbox" class="abs">
<svg class="abs" style="left:0;top:0" width="182" height="217" viewBox="44 97 182 217">
<rect x="56.8" y="109.4" width="17.3" height="17.6" rx="3" fill="#4f9af7"/>
<path d="M61.2 118.9 l3.9 3.3 l5.6 -7.2" fill="none" stroke="#fff" stroke-width="1.9" stroke-linecap="round" stroke-linejoin="round"/>
<rect x="56.8" y="138.2" width="17.3" height="17.6" rx="3" fill="#4f9af7"/>
<path d="M61.2 147.7 l3.9 3.3 l5.6 -7.2" fill="none" stroke="#fff" stroke-width="1.9" stroke-linecap="round" stroke-linejoin="round"/>
<rect x="56.8" y="167.0" width="17.3" height="17.6" rx="3" fill="#4f9af7"/>
<path d="M61.2 176.5 l3.9 3.3 l5.6 -7.2" fill="none" stroke="#fff" stroke-width="1.9" stroke-linecap="round" stroke-linejoin="round"/>
<rect x="56.8" y="195.8" width="17.3" height="17.6" rx="3" fill="#4f9af7"/>
<path d="M61.2 205.3 l3.9 3.3 l5.6 -7.2" fill="none" stroke="#fff" stroke-width="1.9" stroke-linecap="round" stroke-linejoin="round"/>
<rect x="56.8" y="224.6" width="17.3" height="17.6" rx="3" fill="#4f9af7"/>
<path d="M61.2 234.1 l3.9 3.3 l5.6 -7.2" fill="none" stroke="#fff" stroke-width="1.9" stroke-linecap="round" stroke-linejoin="round"/>
<rect x="56.8" y="253.4" width="17.3" height="17.6" rx="3" fill="#4f9af7"/>
<path d="M61.2 262.9 l3.9 3.3 l5.6 -7.2" fill="none" stroke="#fff" stroke-width="1.9" stroke-linecap="round" stroke-linejoin="round"/>
<rect x="56.8" y="282.2" width="17.3" height="17.6" rx="3" fill="#4f9af7"/>
<path d="M61.2 291.7 l3.9 3.3 l5.6 -7.2" fill="none" stroke="#fff" stroke-width="1.9" stroke-linecap="round" stroke-linejoin="round"/>
</svg>
<div class="row" style="top:13px">H边钢筋</div>
<div class="row" style="top:42px">B边钢筋</div>
<div class="row" style="top:70px">角筋</div>
<div class="row" style="top:99px">箍筋</div>
<div class="row" style="top:128px">上层柱插筋下插长度</div>
<div class="row" style="top:157px">显示其它图元</div>
<div class="row" style="top:186px">显示详细公式</div>
  </div>
</div>
</body>
</html>
